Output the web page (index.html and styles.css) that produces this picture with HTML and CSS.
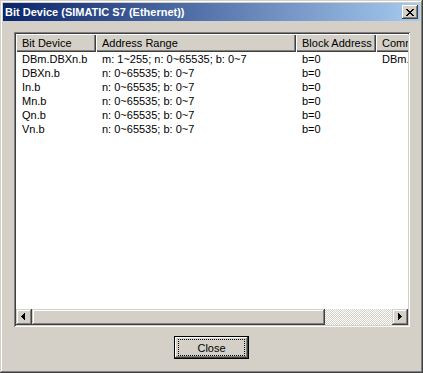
FILE: index.html
```html
<!DOCTYPE html>
<html lang="en">
<head>
    <meta charset="UTF-8">
    <title>Bit Device (SIMATIC S7 (Ethernet))</title>
    <link rel="stylesheet" href="styles.css">
</head>
<body>
    <div class="window">
        <!-- Caption -->
        <div class="titlebar">
            <span class="title">Bit Device (SIMATIC S7 (Ethernet))</span>
            <button class="title-close" aria-label="Close">
                <svg width="8" height="7" viewBox="0 0 8 7" shape-rendering="crispEdges">
                    <path d="M0 0h2v1H0z M6 0h2v1H6z M1 1h2v1H1z M5 1h2v1H5z M2 2h4v1H2z M3 3h2v1H3z M2 4h4v1H2z M1 5h2v1H1z M5 5h2v1H5z M0 6h2v1H0z M6 6h2v1H6z" fill="#000"/>
                </svg>
            </button>
        </div>

        <div class="content">
            <!-- Device list -->
            <div class="list">
                <div class="list-body">
                    <div class="list-grid list-head">
                        <div class="col-head">Bit Device</div>
                        <div class="col-head">Address Range</div>
                        <div class="col-head">Block Address</div>
                        <div class="col-head">Comment</div>
                    </div>
                    <div class="list-grid list-row">
                        <div class="cell">DBm.DBXn.b</div>
                        <div class="cell">m: 1~255; n: 0~65535; b: 0~7</div>
                        <div class="cell">b=0</div>
                        <div class="cell">DBm.</div>
                    </div>
                    <div class="list-grid list-row">
                        <div class="cell">DBXn.b</div>
                        <div class="cell">n: 0~65535; b: 0~7</div>
                        <div class="cell">b=0</div>
                        <div class="cell"></div>
                    </div>
                    <div class="list-grid list-row">
                        <div class="cell">In.b</div>
                        <div class="cell">n: 0~65535; b: 0~7</div>
                        <div class="cell">b=0</div>
                        <div class="cell"></div>
                    </div>
                    <div class="list-grid list-row">
                        <div class="cell">Mn.b</div>
                        <div class="cell">n: 0~65535; b: 0~7</div>
                        <div class="cell">b=0</div>
                        <div class="cell"></div>
                    </div>
                    <div class="list-grid list-row">
                        <div class="cell">Qn.b</div>
                        <div class="cell">n: 0~65535; b: 0~7</div>
                        <div class="cell">b=0</div>
                        <div class="cell"></div>
                    </div>
                    <div class="list-grid list-row">
                        <div class="cell">Vn.b</div>
                        <div class="cell">n: 0~65535; b: 0~7</div>
                        <div class="cell">b=0</div>
                        <div class="cell"></div>
                    </div>
                </div>

                <!-- Horizontal scrollbar -->
                <div class="hscroll">
                    <div class="scroll-btn">
                        <svg width="16" height="16" viewBox="0 0 16 16" shape-rendering="crispEdges">
                            <path d="M8 4h1v7H8z M7 5h1v5H7z M6 6h1v3H6z M5 7h1v1H5z" fill="#000"/>
                        </svg>
                    </div>
                    <div class="scroll-thumb"></div>
                    <div class="scroll-track"></div>
                    <div class="scroll-btn">
                        <svg width="16" height="16" viewBox="0 0 16 16" shape-rendering="crispEdges">
                            <path d="M6 4h1v7H6z M7 5h1v5H7z M8 6h1v3H8z M9 7h1v1H9z" fill="#000"/>
                        </svg>
                    </div>
                </div>
            </div>

            <div class="actions">
                <button class="btn btn-default"><span class="focus">Close</span></button>
            </div>
        </div>
    </div>
</body>
</html>
```

FILE: styles.css
```css
body {
    margin: 0;
    padding: 0;
    background-color: #d4d0c8;
    font-family: "Liberation Sans", Arial, sans-serif;
    font-size: 11px;
    color: #000;
}

.window {
    width: 423px;
    height: 373px;
    box-sizing: border-box;
    padding: 3px;
    background-color: #d4d0c8;
    box-shadow: inset -1px -1px #404040, inset 1px 1px #d4d0c8,
                inset -2px -2px #808080, inset 2px 2px #ffffff;
    display: flex;
    flex-direction: column;
}

/* Caption bar */
.titlebar {
    height: 18px;
    display: flex;
    align-items: center;
    background: linear-gradient(to right, #0a246a, #a6caf0);
}

.title {
    flex: 1;
    padding-left: 2px;
    color: #ffffff;
    font-weight: bold;
    line-height: 18px;
    white-space: nowrap;
}

.title-close {
    width: 16px;
    height: 14px;
    margin-right: 2px;
    padding: 0;
    border: none;
    background-color: #d4d0c8;
    box-shadow: inset -1px -1px #404040, inset 1px 1px #ffffff,
                inset -2px -2px #808080;
    display: flex;
    align-items: center;
    justify-content: center;
}

.title-close svg {
    display: block;
}

.content {
    flex: 1;
    display: flex;
    flex-direction: column;
}

/* List view */
.list {
    margin: 11px 0 0 11px;
    width: 396px;
    height: 295px;
    box-sizing: border-box;
    padding: 2px;
    background-color: #ffffff;
    box-shadow: inset 1px 1px #808080, inset -1px -1px #ffffff,
                inset 2px 2px #404040, inset -2px -2px #d4d0c8;
    display: flex;
    flex-direction: column;
}

.list-body {
    flex: 1;
    overflow: hidden;
}

.list-grid {
    display: grid;
    grid-template-columns: 80px 200px 80px 80px;
    width: 440px;
}

.col-head {
    height: 18px;
    box-sizing: border-box;
    padding: 1px 0 0 6px;
    line-height: 17px;
    background-color: #d4d0c8;
    box-shadow: inset 1px 1px #ffffff, inset -1px -1px #404040,
                inset -2px -2px #808080;
    white-space: nowrap;
    overflow: hidden;
}

.list-row {
    height: 14px;
}

.cell {
    line-height: 14px;
    padding-left: 6px;
    white-space: nowrap;
    overflow: hidden;
}

/* Scrollbar */
.hscroll {
    height: 16px;
    display: flex;
}

.scroll-btn,
.scroll-thumb {
    background-color: #d4d0c8;
    box-shadow: inset -1px -1px #404040, inset 1px 1px #d4d0c8,
                inset -2px -2px #808080, inset 2px 2px #ffffff;
}

.scroll-btn {
    width: 16px;
    height: 16px;
}

.scroll-btn svg {
    display: block;
}

.scroll-thumb {
    width: 293px;
}

.scroll-track {
    flex: 1;
    background: repeating-conic-gradient(#d4d0c8 0 25%, #ffffff 0 50%) 0 0 / 2px 2px;
}

/* Buttons */
.actions {
    display: flex;
    justify-content: center;
    margin-top: 9px;
}

.btn {
    width: 75px;
    height: 23px;
    padding: 3px;
    box-sizing: border-box;
    font-family: inherit;
    font-size: 11px;
    color: #000;
    background-color: #d4d0c8;
    border: none;
    box-shadow: inset -1px -1px #404040, inset 1px 1px #ffffff,
                inset -2px -2px #808080;
    display: flex;
}

.btn-default {
    border: 1px solid #000;
    padding: 2px 3px;
}

.focus {
    flex: 1;
    display: flex;
    align-items: center;
    justify-content: center;
    outline: 1px dotted #000;
    outline-offset: -1px;
}
```
